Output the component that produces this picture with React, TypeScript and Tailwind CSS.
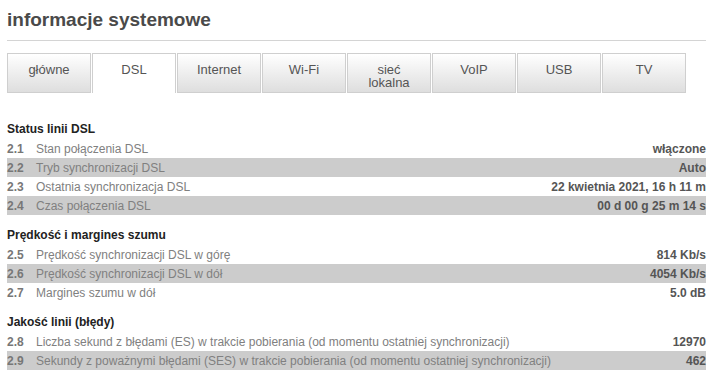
const tabs = ["główne", "DSL", "Internet", "Wi-Fi", "sieć lokalna", "VoIP", "USB", "TV"];

type Row = { n: string; label: string; value: string };

const sections: { title: string; rows: Row[] }[] = [
  {
    title: "Status linii DSL",
    rows: [
      { n: "2.1", label: "Stan połączenia DSL", value: "włączone" },
      { n: "2.2", label: "Tryb synchronizacji DSL", value: "Auto" },
      { n: "2.3", label: "Ostatnia synchronizacja DSL", value: "22 kwietnia 2021, 16 h 11 m" },
      { n: "2.4", label: "Czas połączenia DSL", value: "00 d 00 g 25 m 14 s" },
    ],
  },
  {
    title: "Prędkość i margines szumu",
    rows: [
      { n: "2.5", label: "Prędkość synchronizacji DSL w górę", value: "814 Kb/s" },
      { n: "2.6", label: "Prędkość synchronizacji DSL w dół", value: "4054 Kb/s" },
      { n: "2.7", label: "Margines szumu w dół", value: "5.0 dB" },
    ],
  },
  {
    title: "Jakość linii (błędy)",
    rows: [
      { n: "2.8", label: "Liczba sekund z błędami (ES) w trakcie pobierania (od momentu ostatniej synchronizacji)", value: "12970" },
      { n: "2.9", label: "Sekundy z poważnymi błędami (SES) w trakcie pobierania (od momentu ostatniej synchronizacji)", value: "462" },
    ],
  },
];

export default function App() {
  return (
    <div className="w-[720px] h-[379px] overflow-hidden bg-white pl-[7px] pr-[14px] font-['Liberation_Sans',Arial,sans-serif]">
      {/* Title */}
      <h1 className="pt-[9px] h-[41px] text-[19px] leading-[22px] font-bold text-[#4a4a4a] border-b border-[#d4d4d4]">
        informacje systemowe
      </h1>

      {/* Tabs */}
      <div className="flex gap-px mt-[12px] h-[40px]">
        {tabs.map((t) => {
          const active = t === "DSL";
          return (
            <div
              key={t}
              className={`w-[84px] flex justify-center pt-[9px] text-center text-[13px] leading-[13px] text-[#555] border border-[#cfcfcf] ${
                active ? "bg-white border-b-0" : "bg-gradient-to-b from-white to-[#dedede]"
              }`}
            >
              <span className="w-[50px]">{t}</span>
            </div>
          );
        })}
      </div>

      {/* Sections */}
      <div className="pt-[26px]">
        {sections.map((s, i) => (
          <div key={s.title} className={i > 0 ? "mt-[10px]" : ""}>
            <div className="h-[20px] flex items-center text-[12px] font-bold text-[#222]">{s.title}</div>
            {s.rows.map((r, j) => (
              <div
                key={r.n}
                className={`h-[19px] flex items-center text-[12px] ${j % 2 === 1 ? "bg-[#cccccc]" : ""}`}
              >
                <span className="w-[29px] font-bold text-[#777]">{r.n}</span>
                <span className="flex-1 text-[#808080]">{r.label}</span>
                <span className="font-bold text-[#555]">{r.value}</span>
              </div>
            ))}
          </div>
        ))}
      </div>
    </div>
  );
}
